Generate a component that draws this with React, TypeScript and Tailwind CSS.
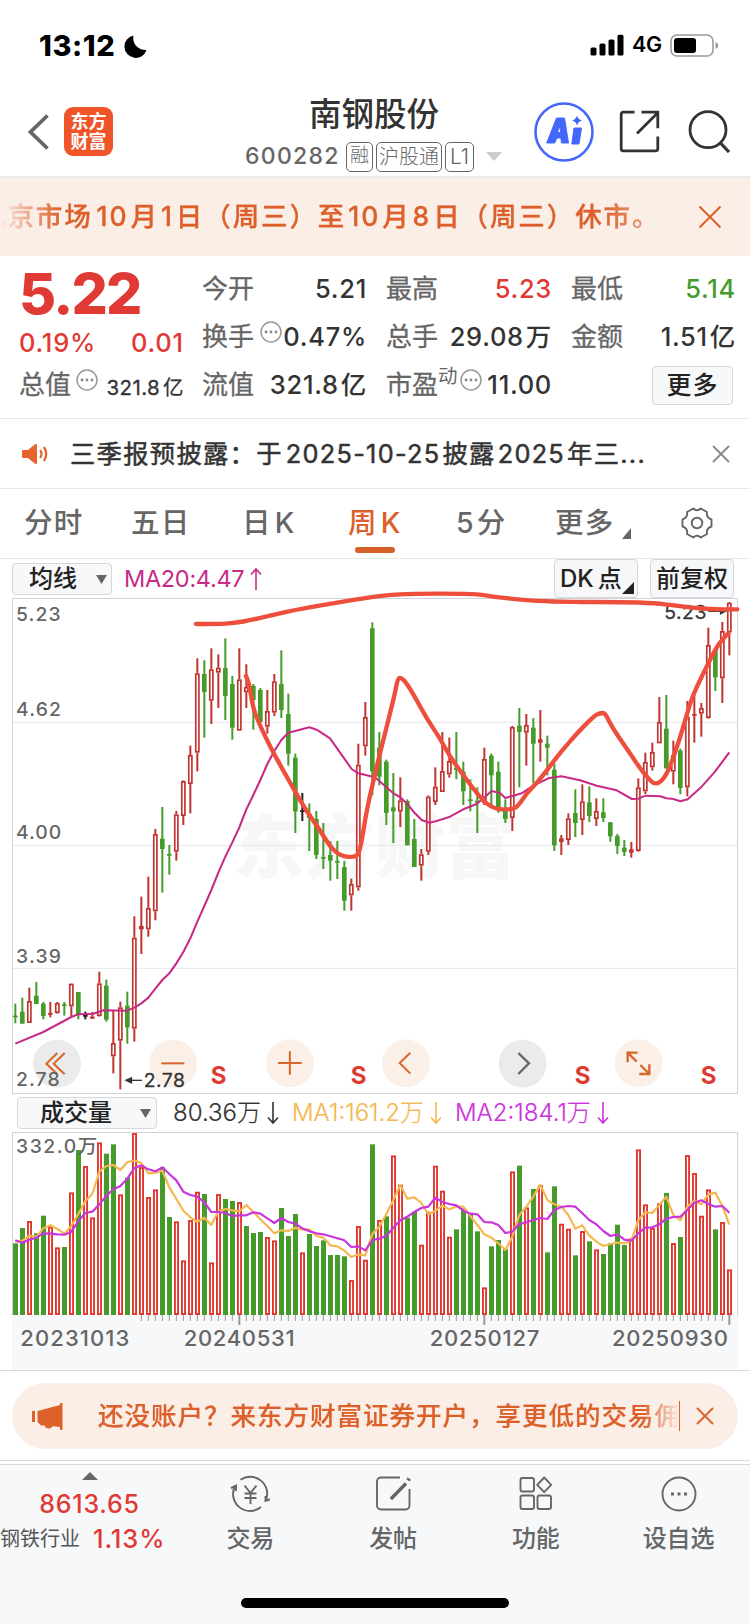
import React from 'react';

type Candle = [kind: string, high: number, top: number, bottom: number, low: number];

const GREEN = '#459c2a';
const CANDLE_RED = '#bf342f';
const VOLUME_RED = '#e0352c';

// Charts are drawn in thirds of a pixel, one bar every 21 units
const barX = (i: number) => 46 + 21 * i;

const CANDLES: Candle[] = [
  ['g', 1241, 1277, 1282, 1300], ['g', 1223, 1265, 1301, 1301], ['r', 1193, 1233, 1299, 1299],
  ['g', 1176, 1217, 1242, 1242], ['g', 1236, 1241, 1278, 1288], ['r', 1236, 1269, 1274, 1282],
  ['r', 1236, 1239, 1269, 1271], ['g', 1236, 1243, 1248, 1277], ['r', 1180, 1181, 1249, 1281],
  ['g', 1206, 1206, 1275, 1288], ['k', 1265, 1275, 1280, 1288], ['r', 1266, 1280, 1286, 1286],
  ['r', 1145, 1180, 1278, 1280], ['g', 1169, 1187, 1289, 1295], ['r', 1260, 1359, 1399, 1450],
  ['r', 1235, 1252, 1352, 1498], ['g', 1205, 1247, 1312, 1361], ['r', 979, 1043, 1316, 1355],
  ['r', 920, 1008, 1018, 1092], ['r', 860, 954, 1018, 1040], ['r', 717, 732, 964, 991],
  ['g', 651, 746, 777, 908], ['g', 765, 792, 797, 854], ['r', 663, 673, 785, 812],
  ['r', 571, 573, 678, 705], ['r', 467, 495, 582, 670], ['r', 205, 250, 488, 544],
  ['g', 211, 252, 306, 443], ['r', 175, 238, 332, 402], ['r', 193, 233, 248, 354],
  ['g', 145, 234, 318, 390], ['g', 258, 282, 413, 449], ['r', 175, 268, 422, 422],
  ['r', 223, 291, 307, 354], ['g', 282, 288, 330, 419], ['g', 294, 300, 396, 400],
  ['r', 300, 363, 410, 431], ['r', 252, 274, 368, 378], ['g', 181, 282, 360, 384],
  ['g', 311, 372, 491, 527], ['g', 491, 503, 664, 729], ['k', 609, 661, 666, 693],
  ['g', 640, 672, 684, 783], ['g', 663, 687, 795, 807], ['g', 699, 801, 806, 837],
  ['g', 753, 795, 812, 872], ['g', 753, 813, 818, 867], ['g', 813, 831, 932, 962],
  ['r', 866, 882, 916, 962], ['r', 461, 524, 892, 902], ['r', 336, 381, 469, 497],
  ['g', 97, 115, 544, 616], ['g', 426, 473, 560, 586], ['g', 509, 515, 669, 705],
  ['g', 549, 652, 664, 759], ['r', 562, 631, 665, 711], ['g', 628, 633, 766, 766],
  ['g', 687, 747, 831, 831], ['r', 777, 793, 827, 872], ['r', 616, 620, 785, 795],
  ['r', 532, 590, 636, 645], ['r', 426, 543, 606, 606], ['r', 443, 513, 553, 563],
  ['g', 426, 533, 540, 568], ['g', 515, 545, 604, 645], ['g', 568, 628, 633, 664],
  ['g', 592, 632, 638, 729], ['r', 473, 507, 640, 645], ['g', 491, 497, 556, 650],
  ['g', 515, 545, 655, 668], ['g', 628, 662, 687, 699], ['r', 408, 411, 684, 723],
  ['g', 354, 407, 426, 592], ['r', 372, 405, 428, 527], ['g', 384, 413, 461, 580],
  ['r', 360, 448, 458, 515], ['g', 437, 461, 473, 556], ['g', 521, 539, 766, 783],
  ['r', 735, 745, 756, 795], ['r', 670, 685, 750, 765], ['g', 598, 669, 699, 741],
  ['r', 583, 634, 690, 735], ['g', 589, 637, 678, 696], ['r', 625, 663, 687, 708],
  ['g', 625, 667, 684, 696], ['g', 696, 697, 739, 755], ['g', 732, 738, 768, 792],
  ['g', 750, 773, 786, 798], ['r', 756, 778, 788, 803], ['r', 565, 592, 783, 785],
  ['r', 488, 516, 604, 612], ['r', 458, 486, 532, 542], ['r', 321, 396, 460, 460],
  ['g', 315, 416, 535, 536], ['r', 452, 495, 545, 583], ['g', 476, 482, 594, 613],
  ['r', 333, 380, 592, 619], ['r', 310, 372, 377, 458], ['r', 339, 354, 371, 440],
  ['r', 113, 165, 384, 386], ['g', 175, 180, 262, 303], ['r', 96, 123, 265, 339],
  ['r', 36, 38, 127, 196],
];

const VOLUMES =
  'g460 g414 r393 g430 g377 r409 r472 g471 r307 g180 r228 r382 r157 g191 g163 r313 g263 r129 r231 r321 r298 g231 g381 r394 r511 r390 r305 g312 r517 r312 g327 g333 r336 g408 g429 g426 r441 r451 g354 g438 g372 r487 g432 g468 g451 g495 g495 g499 r570 r408 r509 g163 r390 g379 r196 r284 g383 g366 r464 r365 r227 r302 r440 g418 g355 g371 g424 r592 g469 g450 g478 r244 g227 r352 g297 r285 g487 g289 r401 r416 g496 r423 g454 r478 g492 g459 g404 g465 r445 r178 r343 r414 r340 g309 r459 g441 r195 r249 r377 r298 g418 r396 r538'.split(
    ' ',
  );

const VOLUME_MA1 = [
  455, 452, 438, 440, 415, 406, 417, 431, 408, 372, 333, 312, 245, 228, 225, 240, 217, 211, 219,
  250, 248, 242, 292, 327, 362, 382, 396, 383, 405, 364, 357, 361, 364, 345, 366, 388, 408, 430,
  421, 423, 413, 419, 418, 438, 443, 466, 469, 482, 501, 493, 496, 431, 410, 372, 330, 285, 326,
  322, 339, 373, 362, 347, 358, 350, 350, 378, 405, 433, 443, 460, 480, 440, 375, 350, 320, 284,
  330, 343, 350, 375, 416, 406, 437, 455, 468, 462, 458, 460, 452, 390, 367, 369, 345, 320, 375,
  391, 350, 332, 343, 313, 308, 348, 404,
];

const VOLUME_MA2 = [
  451, 458, 449, 443, 430, 431, 433, 434, 425, 393, 369, 365, 343, 318, 298, 288, 266, 234, 226,
  238, 244, 232, 252, 271, 305, 315, 320, 337, 366, 366, 369, 378, 376, 376, 367, 371, 385, 399,
  384, 396, 401, 415, 424, 430, 433, 439, 445, 451, 471, 469, 481, 450, 446, 437, 413, 391, 380,
  366, 354, 350, 323, 336, 342, 346, 362, 371, 373, 396, 397, 405, 429, 425, 402, 397, 390, 384,
  387, 360, 351, 348, 350, 370, 390, 403, 423, 438, 433, 449, 452, 430, 413, 412, 403, 386, 381,
  380, 360, 338, 331, 342, 350, 348, 368,
];

const MA20 =
  '46,1361 130,1326 214,1281 235,1273 280,1271 310,1261 382,1262 403,1253 424,1240 445,1223 466,1196 487,1170 508,1150 529,1120 550,1086 571,1045 592,995 613,948 634,900 655,848 676,800 697,757 718,712 739,658 760,615 781,570 802,522 823,483 844,450 865,428 928,412 950,419 990,445 1055,537 1075,550 1125,562 1180,610 1200,621 1222,642 1245,670 1265,690 1288,698 1310,693 1350,680 1390,658 1430,642 1475,603 1500,609 1516,624 1540,617 1565,610 1600,587 1645,565 1684,559 1740,571 1790,587 1850,601 1896,627 1915,626 1937,617 1980,619 2000,625 2020,627 2041,634 2063,628 2105,590 2145,545 2188,487';

const TREND_TOP: number[][] = [
  [588, 102], [660, 102], [710, 98], [750, 91], [890, 58], [1000, 40], [1130, 18], [1220, 11],
  [1410, 11], [1450, 15], [1500, 23], [1640, 36], [1940, 36], [2050, 50], [2130, 58], [2212, 58],
];

const TREND_WAVE: number[][] = [
  [738, 258], [748, 280], [758, 350], [775, 395], [810, 470], [860, 560], [920, 665], [950, 705],
  [985, 762], [1010, 790], [1035, 800], [1060, 801], [1075, 795], [1085, 755], [1100, 660],
  [1130, 530], [1160, 410], [1185, 310], [1193, 266], [1203, 262], [1220, 280], [1250, 330],
  [1280, 385], [1320, 445], [1350, 500], [1400, 570], [1435, 615], [1460, 642], [1485, 655],
  [1500, 658], [1543, 658], [1560, 640], [1580, 610], [1600, 590], [1630, 555], [1680, 488],
  [1740, 420], [1785, 376], [1800, 370], [1814, 368], [1825, 390], [1845, 425], [1890, 490],
  [1920, 535], [1945, 565], [1962, 582], [1982, 577], [2005, 545], [2040, 445], [2070, 340],
  [2090, 290], [2120, 230], [2145, 180], [2165, 150], [2185, 130],
];

// Rounds the corners of a freehand stroke through the segment midpoints
const smooth = (pts: number[][]) => {
  let d = `M${pts[0][0]} ${pts[0][1]}`;
  for (let i = 1; i < pts.length - 1; i++) {
    const mx = (pts[i][0] + pts[i + 1][0]) / 2;
    const my = (pts[i][1] + pts[i + 1][1]) / 2;
    d += ` Q${pts[i][0]} ${pts[i][1]} ${mx} ${my}`;
  }
  const last = pts[pts.length - 1];
  return `${d} L${last[0]} ${last[1]}`;
};

const series = (values: number[]) => values.map((v, i) => `${barX(i)},${v}`).join(' ');

const StatusBar = () => (
  <div className="flex h-[90px] items-center pl-[39px] pr-[31px]">
    <span className="w-[77px] whitespace-nowrap text-[29px] font-extrabold leading-none tracking-[0.6px] text-black">
      13:12
    </span>
    <svg className="ml-2 mt-0.5" width="23" height="23" viewBox="0 0 23 23">
      <path d="M9.5 0.5A12 12 0 0 0 22.5 15A11.3 11.3 0 1 1 9.5 0.5Z" />
    </svg>
    <svg className="ml-auto" width="35" height="22" viewBox="0 0 35 22">
      <rect x="0.5" y="13.5" width="6" height="8" rx="1.6" />
      <rect x="9.5" y="9.5" width="6" height="12" rx="1.6" />
      <rect x="18.5" y="5.5" width="6" height="16" rx="1.6" />
      <rect x="27.5" y="0.8" width="6" height="20.7" rx="1.6" />
    </svg>
    <span className="ml-[7px] w-[30px] whitespace-nowrap text-[21.5px] font-semibold leading-none tracking-[-0.2px] text-black">
      4G
    </span>
    <svg className="ml-[8px]" width="49" height="23" viewBox="0 0 49 23">
      <rect x="1" y="1" width="42" height="21" rx="6" fill="none" stroke="#9b9b9b" strokeWidth="1.6" />
      <rect x="4" y="4" width="22" height="15" rx="3" />
      <path d="M45.5 8v7c2-.7 2.800-2 2.800-3.500s-.8-2.800-2.800-3.500Z" fill="#9b9b9b" />
    </svg>
  </div>
);

const Header = () => (
  <header className="flex h-[88px] border-b-2 border-[#ebebeb] pl-[27px] pr-[18px]">
    <svg className="mt-[23px]" width="24" height="38" viewBox="0 0 24 38">
      <path d="M20.500 2.500 3.500 19l17 16.500" fill="none" stroke="#666" strokeWidth="3.800" />
    </svg>
    <div className="ml-[13px] mt-[17px] flex h-[49px] w-[49px] flex-col items-center justify-center rounded-[9px] bg-[#f0552a] text-[18px] font-bold leading-[20px] text-white">
      <span>东方</span>
      <span>财富</span>
    </div>
    <div className="ml-[132px] flex w-[257px] flex-col">
      <h1 className="ml-[64px] mt-[8px] whitespace-nowrap text-[32.5px] font-medium leading-[34px] text-[#333]">
        南钢股份
      </h1>
      <div className="mt-[9px] flex h-[31px] items-center text-[#666]">
        <span className="w-[101px] text-[23px] font-medium leading-none tracking-[1.300px]">600282</span>
        <span className="flex h-[30px] w-[27px] items-center justify-center rounded-[5px] border border-[#666] text-[19px] font-light">
          融
        </span>
        <span className="ml-[3px] flex h-[30px] w-[66px] items-center justify-center whitespace-nowrap rounded-[5px] border border-[#666] text-[20px] font-light">
          沪股通
        </span>
        <span className="ml-[3px] flex h-[30px] w-[29px] items-center justify-center rounded-[5px] border border-[#666] text-[21px] font-light">
          L1
        </span>
        <svg className="ml-[12px]" width="16" height="9" viewBox="0 0 16 9">
          <path d="M0 0h16L8 9Z" fill="#ccc" />
        </svg>
      </div>
    </div>
    <svg className="ml-[32px] mt-[12px]" width="60" height="60" viewBox="0 0 60 60">
      <circle cx="30" cy="30" r="28.500" fill="none" stroke="#4268fb" strokeWidth="2.600" />
      <path
        d="M22.500 16h8l4 25h-7l-.6-5h-4l-2.200 5h-8ZM26 24l-2.500 6.500h3.200ZM40 26h7.500l-2.500 16h-7.200Z"
        fill="#4268fb"
        stroke="#4268fb"
        strokeWidth="1"
        strokeLinejoin="round"
      />
      <path d="M43 13.500q1 4 5 5-4 1-5 5-1-4-5-5 4-1 5-5Z" fill="#4268fb" />
    </svg>
    <svg className="ml-[25px] mt-[20px]" width="41" height="43" viewBox="0 0 41 43" fill="none" stroke="#333" strokeWidth="2.800">
      <path d="M15.500 2.200H4.200a2 2 0 0 0-2 2v34.600a2 2 0 0 0 2 2h32.600a2 2 0 0 0 2-2V26.500" />
      <path d="M22.500 2.200h16.300v16M38 3.500 18 23.500" />
    </svg>
    <svg className="ml-[28px] mt-[19px]" width="43" height="44" viewBox="0 0 43 44" fill="none" stroke="#333" strokeWidth="2.800">
      <circle cx="20" cy="20.700" r="18" />
      <path d="m32 33.500 9 9.500" strokeWidth="3.200" />
    </svg>
  </header>
);

const Ticker = () => (
  <div className="flex h-[78px] items-center bg-[#fbeee7] text-[#dc602a]">
    <div className="relative h-10 w-[655px] overflow-hidden [mask-image:linear-gradient(to_right,transparent,#000_60px,#000_600px,rgba(0,0,0,0.6)_645px)]">
      <span className="absolute left-[-21px] top-0 whitespace-nowrap text-[26.5px] font-medium leading-[39px] tracking-[1.900px] [-webkit-text-stroke:0.3px_#dc602a]">
        北京市场<span className="ml-1 mr-0.5">10</span>月<span className="mx-0.5">1</span>日（周三）至
        <span className="mx-0.5">10</span>月<span className="mx-0.5">8</span>日（周三）休市。
      </span>
    </div>
    <svg className="ml-[43px]" width="24" height="24" viewBox="0 0 24 24">
      <path d="m1.500 1.500 21 21m0-21-21 21" stroke="#dc602a" strokeWidth="2" />
    </svg>
  </div>
);

const Dots = ({ className }: { className?: string }) => (
  <svg className={className} width="22" height="22" viewBox="0 0 22 22">
    <circle cx="11" cy="11" r="10" fill="none" stroke="#999" strokeWidth="1.500" />
    <circle cx="6" cy="11" r="1.400" fill="#888" />
    <circle cx="11" cy="11" r="1.400" fill="#888" />
    <circle cx="16" cy="11" r="1.400" fill="#888" />
  </svg>
);

interface StatProps {
  label: string;
  value: string;
  unit?: string;
  color?: string;
  children?: React.ReactNode;
}

const Stat = ({ label, value, unit, color = 'text-[#333]', children }: StatProps) => (
  <div className="flex h-12 items-center whitespace-nowrap text-[26px] leading-none">
    <span className="text-[#666] [-webkit-text-stroke:0.3px_#666]">{label}</span>
    {children}
    <span className={`ml-auto flex items-center text-[25.5px] font-medium tracking-[0.7px] ${color}`}>
      {value}
      {unit && <span className="ml-[2px]">{unit}</span>}
    </span>
  </div>
);

const Quote = () => (
  <section className="flex h-[163px] border-b border-[#e8e8e8] pl-[19px] pr-[13px] pt-[9px]">
    <div className="w-[165px]">
      <div className="flex h-[56px] items-center text-[57px] font-extrabold leading-none tracking-[-1.800px] text-[#e03a34]">
        5.22
      </div>
      <div className="flex h-[44px] items-center justify-between text-[25.5px] font-medium leading-none tracking-[0.8px] text-[#e03a34]">
        <span>0.19%</span>
        <span>0.01</span>
      </div>
      <div className="flex h-[40px] items-center whitespace-nowrap">
        <span className="text-[26px] leading-none text-[#666] [-webkit-text-stroke:0.3px_#666]">总值</span>
        <Dots className="ml-[5px] -mt-[10px]" />
        <span className="ml-auto mt-[7px] text-[20.5px] leading-none tracking-[0.4px] text-[#333] [-webkit-text-stroke:0.3px_#333]">
          321.8<span className="ml-[3px]">亿</span>
        </span>
      </div>
    </div>
    <div className="ml-[18px] w-[165px]">
      <Stat label="今开" value="5.21" />
      <Stat label="换手" value="0.47%">
        <Dots className="ml-[6px] -mt-[10px]" />
      </Stat>
      <Stat label="流值" value="321.8" unit="亿" />
    </div>
    <div className="ml-[19px] w-[166px]">
      <Stat label="最高" value="5.23" color="text-[#e03a34]" />
      <Stat label="总手" value="29.08" unit="万" />
      <Stat label="市盈" value="11.00">
        <span className="-mt-[16px] text-[19.5px] text-[#666]">动</span>
        <Dots className="ml-[2px] -mt-[10px]" />
      </Stat>
    </div>
    <div className="ml-[19px] w-[165px]">
      <Stat label="最低" value="5.14" color="text-[#459c2a]" />
      <Stat label="金额" value="1.51" unit="亿" />
      <div className="flex h-12 items-center justify-end pr-[3px]">
        <button className="h-[39px] w-[81px] rounded-[4px] border border-[#d5d7dd] bg-[#f7f8fa] text-[25px] font-medium leading-none tracking-[1px] text-[#222]">
          更多
        </button>
      </div>
    </div>
  </section>
);

const Notice = () => (
  <div className="flex h-[70px] items-center border-b border-[#e8e8e8] pl-[22px] pr-[20px]">
    <svg width="28" height="22" viewBox="0 0 28 22">
      <path
        d="M1 7h5L13 1.300q2-1 2 1v17.400q0 2-2 1L6 15H1q-1 0-1-1V8q0-1 1-1Z"
        fill="#e8632c"
      />
      <path d="M18.200 7q2.600 4 0 8M21.800 4q5 7 0 14" fill="none" stroke="#e8632c" strokeWidth="2.200" />
    </svg>
    <span className="ml-[20px] whitespace-nowrap text-[25.3px] leading-none tracking-[1.300px] text-[#333] [-webkit-text-stroke:0.5px_#333]">
      三季报预披露：于<span className="ml-[3px] mr-[2px]">2025-10-25</span>披露
      <span className="mx-[2px]">2025</span>年三...
    </span>
    <svg className="ml-auto" width="18" height="18" viewBox="0 0 18 18">
      <path d="m1 1 16 16M17 1 1 17" stroke="#888" strokeWidth="1.800" />
    </svg>
  </div>
);

const Tabs = () => (
  <nav className="relative flex h-[70px] items-center whitespace-nowrap border-b border-[#e8e8e8] text-[28.5px] font-medium leading-none tracking-[1.200px] text-[#666]">
    <span className="ml-[24px] w-[107px]">分时</span>
    <span className="w-[111px]">五日</span>
    <span className="flex w-[106px] items-center gap-[3px]">
      日<span>K</span>
    </span>
    <span className="flex w-[108px] items-center gap-[3px] text-[#dc602a]">
      周<span>K</span>
    </span>
    <span className="flex w-[99px] items-center gap-0.5">
      <span>5</span>分
    </span>
    <span className="w-[67px]">更多</span>
    <svg className="mt-5" width="9" height="11" viewBox="0 0 9 11">
      <path d="M9 0v11H0Z" fill="#666" />
    </svg>
    <svg className="ml-[50px] -mt-0.5" width="32" height="32" viewBox="0 0 32 32" fill="none" stroke="#666" strokeWidth="1.900">
      <path
        d="M12.300 1.500Q16 5 19.700 1.500L26 5q-1 5.500 4.500 7.500v7Q25 21 26 27l-6.300 3.500Q16 27 12.300 30.500L6 27q1-6-4.500-7.500v-7Q7 10.500 6 5Z"
        strokeLinejoin="round"
      />
      <circle cx="16" cy="16" r="5.300" />
    </svg>
    <i className="absolute bottom-[5px] left-[355px] h-[6px] w-10 rounded-full bg-[#d85f27]" />
  </nav>
);

const Caret = ({ className }: { className?: string }) => (
  <svg className={className} width="11" height="9" viewBox="0 0 11 9">
    <path d="M0 0h11L5.500 9Z" fill="#666" />
  </svg>
);

const PriceToolbar = () => (
  <div className="flex h-[39px] pl-[12px] pr-[16px] text-[24px] leading-none text-[#222]">
    <div className="mt-[4px] flex h-[32px] w-[100px] items-center rounded-[4px] border border-[#d5d7dd] bg-[#f7f8fa] pl-[16px] font-medium">
      均线
      <Caret className="ml-auto mr-[4px]" />
    </div>
    <div className="ml-[12px] mt-[4px] flex h-[32px] items-center text-[23.500px] tracking-[-0.3px] text-[#c72b86]">
      MA20:4.47
      <DirectionArrow up color="#c72b86" />
    </div>
    <div className="ml-auto flex h-[39px] w-[84px] items-center rounded-[4px] border border-[#d5d7dd] bg-[#f7f8fa] pl-[5px] font-medium">
      DK<span className="ml-1">点</span>
      <svg className="mt-auto mb-[3px]" width="12" height="12" viewBox="0 0 12 12">
        <path d="M12 0v12H0Z" fill="#222" />
      </svg>
    </div>
    <div className="ml-[12px] flex h-[39px] w-[84px] items-center justify-center whitespace-nowrap rounded-[4px] border border-[#d5d7dd] bg-[#f7f8fa] font-medium">
      前复权
    </div>
  </div>
);

const DirectionArrow = ({ up, color }: { up?: boolean; color: string }) => (
  <svg className="ml-[6px]" width="12" height="24" viewBox="0 0 12 24" fill="none" stroke={color} strokeWidth="1.600">
    <path d={up ? 'M6 23V2M1 7.500 6 2l5 5.500' : 'M6 1v21M1 16.500 6 22l5-5.500'} />
  </svg>
);

const PriceChart = () => (
  <svg className="block overflow-visible" width="750" height="496" viewBox="0 24 2250 1488">
    <text x="700" y="848" fontSize="212" fontWeight="900" fill="#f7f7f7" textLength="848">
      东方财富
    </text>
    {[397, 766, 1135].map((y) => (
      <path key={y} d={`M38 ${y}H2212`} stroke="#e6e7ee" strokeWidth="3" />
    ))}
    <rect x="37.500" y="25.500" width="2175" height="1485" fill="none" stroke="#d2d3d8" strokeWidth="3" />

    {CANDLES.map(([kind, high, top, bottom, low], i) => {
      const x = barX(i);
      const color = kind === 'g' ? GREEN : kind === 'r' ? CANDLE_RED : '#222';
      const hollow = kind === 'r' && bottom - top > 12;
      return (
        <g key={i} fill={color}>
          <rect x={x - 3} y={high} width="6" height={(hollow ? top : low) - high} />
          {hollow && <rect x={x - 3} y={bottom} width="6" height={low - bottom} />}
          {hollow ? (
            <rect x={x - 4.7} y={top + 2.5} width="9.4" height={bottom - top - 5} fill="#fff" stroke={color} strokeWidth="5" />
          ) : (
            <rect x={x - 7} y={top} width="14" height={bottom - top} />
          )}
        </g>
      );
    })}
    <polyline points={MA20} fill="none" stroke="#c72b86" strokeWidth="6.200" strokeLinejoin="round" />

    {/* Chart controls */}
    <g fill="none" stroke="#d9662c" strokeWidth="6">
      <circle cx="171" cy="1421" r="72" fill="#000" fillOpacity="0.08" stroke="none" />
      <path d="M172 1389 139 1421l33 32M194 1389l-33 32 33 32" />
      <circle cx="519" cy="1421" r="72" fill="#f5d9c5" fillOpacity="0.4" stroke="none" />
      <path d="M484 1420h69" />
      <circle cx="870" cy="1420" r="72" fill="#f5d9c5" fillOpacity="0.4" stroke="none" />
      <path d="M834 1419h71M869.500 1384v70" />
      <circle cx="1218" cy="1420" r="72" fill="#f5d9c5" fillOpacity="0.4" stroke="none" />
      <path d="m1231 1388-32 31 32 32" />
      <circle cx="1568" cy="1421" r="72" fill="#000" fillOpacity="0.08" stroke="none" />
      <path d="m1555 1389 32 31-32 32" stroke="#666" strokeWidth="7" />
      <circle cx="1916" cy="1420" r="72" fill="#f5d9c5" fillOpacity="0.4" stroke="none" />
      <path d="M1883 1417v-29h30M1883 1388l27 27M1948 1423v29h-30M1948 1452l-27-27" strokeWidth="7" />
    </g>

    <g fontSize="58" fontWeight="500" fill="#666">
      <text x="48" y="94" textLength="134">5.23</text>
      <text x="48" y="378" textLength="135">4.62</text>
      <text x="48" y="746" textLength="136">4.00</text>
      <text x="48" y="1118" textLength="135">3.39</text>
      <text x="48" y="1488" textLength="131">2.78</text>
    </g>
    <g fontSize="58" fill="#333" stroke="#333" strokeWidth="0.800">
      <text x="431" y="1492" textLength="124">2.78</text>
      <path d="M380 1471h46" strokeWidth="4" />
      <path d="m374 1471 22-10v20Z" />
      <text x="493" y="87" textLength="126" transform="translate(1500 0)">
        5.23
      </text>
      <path d="M2125 64h40" strokeWidth="4" />
      <path d="m2180 64-20-10v20Z" />
    </g>
    <g fontSize="72" fontWeight="700" fill="#e03a34" textAnchor="middle">
      <text x="656" y="1483">S</text>
      <text x="1076" y="1483">S</text>
      <text x="1748" y="1483">S</text>
      <text x="2126" y="1483">S</text>
    </g>

    <g fill="none" stroke="#ee4f3c" strokeWidth="13" strokeLinejoin="round">
      <path d={smooth(TREND_TOP)} strokeLinecap="round" />
      <path d={smooth(TREND_WAVE)} strokeLinecap="round" />
    </g>
  </svg>
);

const VolumeToolbar = () => (
  <div className="flex h-[38px] items-center whitespace-nowrap pl-[17px] text-[24px] leading-none text-[#333]">
    <div className="flex h-[32px] w-[140px] items-center rounded-[4px] border border-[#d5d7dd] bg-[#f7f8fa] pl-[22px] font-medium text-[#222]">
      成交量
      <Caret className="ml-auto mr-[5px]" />
    </div>
    <div className="ml-[16px] flex w-[119px] items-center font-light [-webkit-text-stroke:0.2px_#333]">
      80.36万
      <DirectionArrow color="#333" />
    </div>
    <div className="flex w-[163px] items-center font-light [-webkit-text-stroke:0.2px_#f4b84f] text-[#f4b84f]">
      MA1:161.2万
      <DirectionArrow color="#f4b84f" />
    </div>
    <div className="flex items-center font-light [-webkit-text-stroke:0.2px_#cb33dc] text-[#cb33dc]">
      MA2:184.1万
      <DirectionArrow color="#cb33dc" />
    </div>
  </div>
);

const VolumeChart = () => (
  <svg className="block" width="750" height="238" viewBox="0 126 2250 714">
    <rect x="36" y="675" width="2178" height="165" fill="#f7f8fa" />
    <path d="M37.500 675V127.500H2212.500V675" fill="none" stroke="#d2d3d8" strokeWidth="3" />
    {VOLUMES.map((bar, i) => {
      const top = Number(bar.slice(1));
      return bar[0] === 'g' ? (
        <rect key={i} x={barX(i) - 7} y={top} width="15" height={675 - top} fill={GREEN} />
      ) : (
        <rect key={i} x={barX(i) - 4.2} y={top + 3} width="9.4" height={669 - top} fill="#fff" stroke={VOLUME_RED} strokeWidth="5.6" />
      );
    })}
    {VOLUMES.map((_, i) =>
      i < 18 ? null : i % 35 === 32 ? (
        <path key={i} d={`M${barX(i)} 675v30`} stroke="#999" strokeWidth="6" />
      ) : (
        <path key={i} d={`M${barX(i)} 675v18`} stroke="#999" strokeWidth="3" />
      ),
    )}
    <polyline points={series(VOLUME_MA1)} fill="none" stroke="#f4b84f" strokeWidth="6.500" strokeLinejoin="round" />
    <polyline points={series(VOLUME_MA2)} fill="none" stroke="#cb33dc" strokeWidth="6.500" strokeLinejoin="round" />
    <text x="48" y="188" fontSize="58" fontWeight="500" fill="#666" textLength="243">
      332.0万
    </text>
    <g fontSize="66" fontWeight="500" fill="#666">
      <text x="61" y="768" textLength="327">20231013</text>
      <text x="551" y="768" textLength="333">20240531</text>
      <text x="1539" y="768" textLength="329" transform="translate(-250 0)">20250127</text>
      <text x="1836" y="768" textLength="348">20250930</text>
    </g>
  </svg>
);

const Promo = () => (
  <div className="h-[91px] border-y border-[#d8d9dc] bg-white px-[12px] pt-[12px]">
    <div className="flex h-[66px] items-center rounded-full bg-[#fbeee7] pl-[20px] text-[#dc602a]">
      <svg width="31" height="27" viewBox="0 0 31 27" fill="#dc602a">
        <path d="M0 8h3v11H0ZM5.500 8 28 2V0h2.500v27H28v-3l-7-.8-3 2.300-4-.5-1.500-2.500h-3.500l-3.500-3.500Z" />
      </svg>
      <div className="ml-[35px] w-[582px] overflow-hidden whitespace-nowrap border-r border-[#dc602a] text-[25.500px] font-medium leading-[30px] tracking-[1px] [-webkit-text-stroke:0.2px_#dc602a]">
        <div className="w-[580px] overflow-hidden [mask-image:linear-gradient(to_right,#000_545px,transparent_582px)]">
          还没账户？来东方财富证券开户，享更低的交易佣金
        </div>
      </div>
      <svg className="ml-[16px]" width="18" height="18" viewBox="0 0 18 18">
        <path d="m1 1 16 16M17 1 1 17" stroke="#dc602a" strokeWidth="1.800" />
      </svg>
    </div>
  </div>
);

const ICONS = {
  trade: (
    <>
      <path d="M10.500 5.800A17 17 0 0 1 35.800 26.500M35.500 22v5l5-1.800M31 33A17 17 0 0 1 4.800 12.500M1 14.200l5-2.700v5.500" />
      <path d="m14.500 11.500 6 7.500 6-7.500M20.500 19v11M14.500 19.500h12M14.500 24h12" />
    </>
  ),
  post: (
    <>
      <path d="M27 3.500H8a4 4 0 0 0-4 4v24a4 4 0 0 0 4 4h24.500a4 4 0 0 0 4-4V15" />
      <path d="M33 9.500 17.800 25" strokeWidth="3.400" />
      <path d="m36.300 4.500-1.300 1.800" strokeWidth="4" />
    </>
  ),
  features: (
    <>
      <rect x="4.500" y="4" width="13.500" height="13.500" rx="2" />
      <rect x="4.500" y="21.500" width="13.500" height="13.500" rx="2" />
      <rect x="21.500" y="21.500" width="13.500" height="13.500" rx="2" />
      <path d="m28.200 3.500 7 7.300-7 7.300-7-7.300Z" strokeLinejoin="round" />
    </>
  ),
  watch: (
    <>
      <circle cx="20" cy="20" r="16.500" />
      <path d="M12 20h3M18.500 20h3M25 20h3" strokeWidth="3" />
    </>
  ),
};

const NAV: { icon: keyof typeof ICONS; label: string }[] = [
  { icon: 'trade', label: '交易' },
  { icon: 'post', label: '发帖' },
  { icon: 'features', label: '功能' },
  { icon: 'watch', label: '设自选' },
];

const BottomBar = () => (
  <footer className="mt-[3px] flex h-[161px] flex-col border-t border-[#d8d9dc] bg-[#f7f8fa]">
    <div className="flex h-[100px]">
      <div className="flex w-[179px] flex-col items-center">
        <svg className="mt-[7px]" width="16" height="8" viewBox="0 0 16 8">
          <path d="M8 0l8 8H0Z" fill="#666" />
        </svg>
        <span className="mt-[12px] text-[25px] font-medium leading-[24px] tracking-[0.8px] text-[#e03a34]">8613.65</span>
        <div className="mt-[10px] flex w-full items-center gap-[13px] whitespace-nowrap leading-[26px]">
          <span className="text-[20px] text-[#555]">钢铁行业</span>
          <span className="text-[25.500px] font-medium tracking-[0.9px] text-[#e03a34]">1.13%</span>
        </div>
      </div>
      {NAV.map(({ icon, label }) => (
        <div key={icon} className="flex flex-1 flex-col items-center pt-[9px] text-[#666]">
          <svg width="40" height="40" viewBox="0 0 40 40" fill="none" stroke="#666" strokeWidth="1.900">
            {ICONS[icon]}
          </svg>
          <span className="mt-[12px] text-[24px] font-medium leading-[26px]">{label}</span>
        </div>
      ))}
    </div>
    <div className="mx-auto mt-[33px] h-[10px] w-[268px] rounded-full bg-black" />
  </footer>
);

export default function App() {
  return (
    <div className="h-[1624px] w-[750px] overflow-hidden bg-white font-['Inter','Noto_Sans_CJK_SC',sans-serif]">
      <StatusBar />
      <Header />
      <Ticker />
      <Quote />
      <Notice />
      <Tabs />
      <PriceToolbar />
      <PriceChart />
      <VolumeToolbar />
      <VolumeChart />
      <Promo />
      <BottomBar />
    </div>
  );
}
